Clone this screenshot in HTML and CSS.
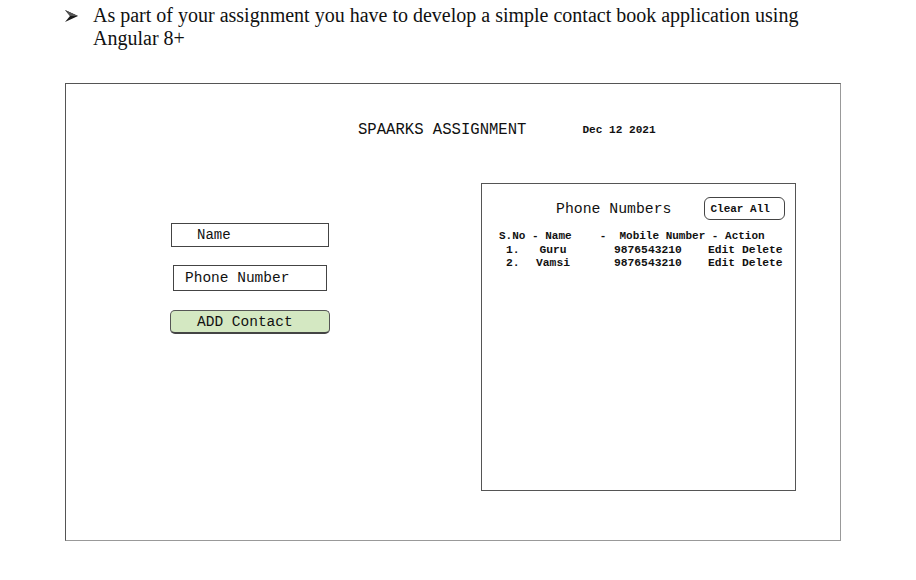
FILE: index.html
```html
<!DOCTYPE html>
<html>
<head>
<meta charset="utf-8">
<link rel="stylesheet" href="styles.css">
</head>
<body>
<div class="intro">
  <span class="bullet"><svg width="14" height="14" viewBox="0 0 14 14"><polygon points="0,1 13,7 0,13 5,7" fill="#1a1a1a"/><polygon points="0,1 13,7 5,7" fill="#555"/></svg></span>
  <p class="intro-text">As part of your assignment you have to develop a simple contact book application using Angular 8+</p>
</div>
<div class="frame">
  <div class="header">
    <span class="title">SPAARKS ASSIGNMENT</span>
    <span class="date">Dec 12 2021</span>
  </div>
  <div class="content">
    <div class="form">
      <div class="field field-name">Name</div>
      <div class="field field-phone">Phone Number</div>
      <div class="add-btn">ADD Contact</div>
    </div>
    <div class="panel">
      <div class="panel-head">
        <span class="panel-title">Phone Numbers</span>
        <span class="clear-btn">Clear All</span>
      </div>
      <div class="table">
        <div class="thead">
          <span class="th1">S.No - Name</span>
          <span class="th2">-  Mobile Number - Action</span>
        </div>
        <div class="row">
          <span>1.</span><span class="name">Guru</span><span class="num">9876543210</span><span>Edit Delete</span>
        </div>
        <div class="row">
          <span>2.</span><span class="name">Vamsi</span><span class="num">9876543210</span><span>Edit Delete</span>
        </div>
      </div>
    </div>
  </div>
</div>
</body>
</html>
```

FILE: styles.css
```css
* { box-sizing: border-box; }
body {
  margin: 0;
  background: #fff;
  color: #111;
  font-family: "Liberation Serif", serif;
}
.intro {
  display: flex;
  padding: 4px 0 0 65px;
  width: 830px;
}
.bullet {
  width: 28px;
  height: 23px;
  flex: none;
  display: flex;
  align-items: center;
}
.intro-text {
  margin: 0;
  font-size: 20px;
  line-height: 23px;
}
.frame {
  margin: 33px 0 0 65px;
  width: 776px;
  height: 458px;
  border: 1px solid #555;
  border-right-color: #999;
  border-bottom-color: #999;
  font-family: "Liberation Mono", "DejaVu Sans Mono", monospace;
}
.header {
  display: flex;
  align-items: center;
  margin-top: 37px;
  padding-left: 292px;
  height: 18px;
}
.title {
  font-size: 15.6px;
  color: #111;
}
.date {
  margin-left: 56px;
  font-size: 11.1px;
  font-weight: bold;
}
.content {
  display: flex;
  margin-top: 44px;
}
.form {
  width: 415px;
  padding: 40px 0 0 105px;
  display: flex;
  flex-direction: column;
  align-items: flex-start;
  font-size: 14.5px;
}
.field {
  border: 1px solid #444;
  display: flex;
  align-items: center;
}
.field-name {
  width: 158px;
  height: 24px;
  padding-left: 25px;
  font-size: 14px;
}
.field-phone {
  margin: 18px 0 0 2px;
  width: 154px;
  height: 26px;
  padding-left: 11px;
}
.add-btn {
  margin: 19px 0 0 -1px;
  width: 160px;
  height: 24px;
  padding-left: 26px;
  display: flex;
  align-items: center;
  background: #d4e8c2;
  border: 1px solid #555;
  border-bottom: 2px solid #444;
  border-radius: 5px;
}
.panel {
  width: 315px;
  height: 308px;
  border: 1px solid #555;
}
.panel-head {
  display: flex;
  align-items: center;
  margin-top: 13px;
  padding-left: 74px;
}
.panel-title {
  font-size: 14.8px;
}
.clear-btn {
  margin-left: 33px;
  width: 81px;
  height: 23px;
  display: flex;
  align-items: center;
  padding-left: 5px;
  border: 1px solid #444;
  border-radius: 6px;
  font-size: 11px;
  font-weight: bold;
}
.table {
  margin-top: 10px;
  font-size: 11.3px;
  font-weight: bold;
  line-height: 13.5px;
}
.thead {
  display: flex;
  padding-left: 17px;
  font-size: 11px;
}
.th2 {
  white-space: pre;
  margin-left: 28px;
}
.row {
  display: grid;
  grid-template-columns: 16px 62px 124px auto;
  padding-left: 24px;
}
.name { text-align: center; }
.num { padding-left: 30px; }
```
